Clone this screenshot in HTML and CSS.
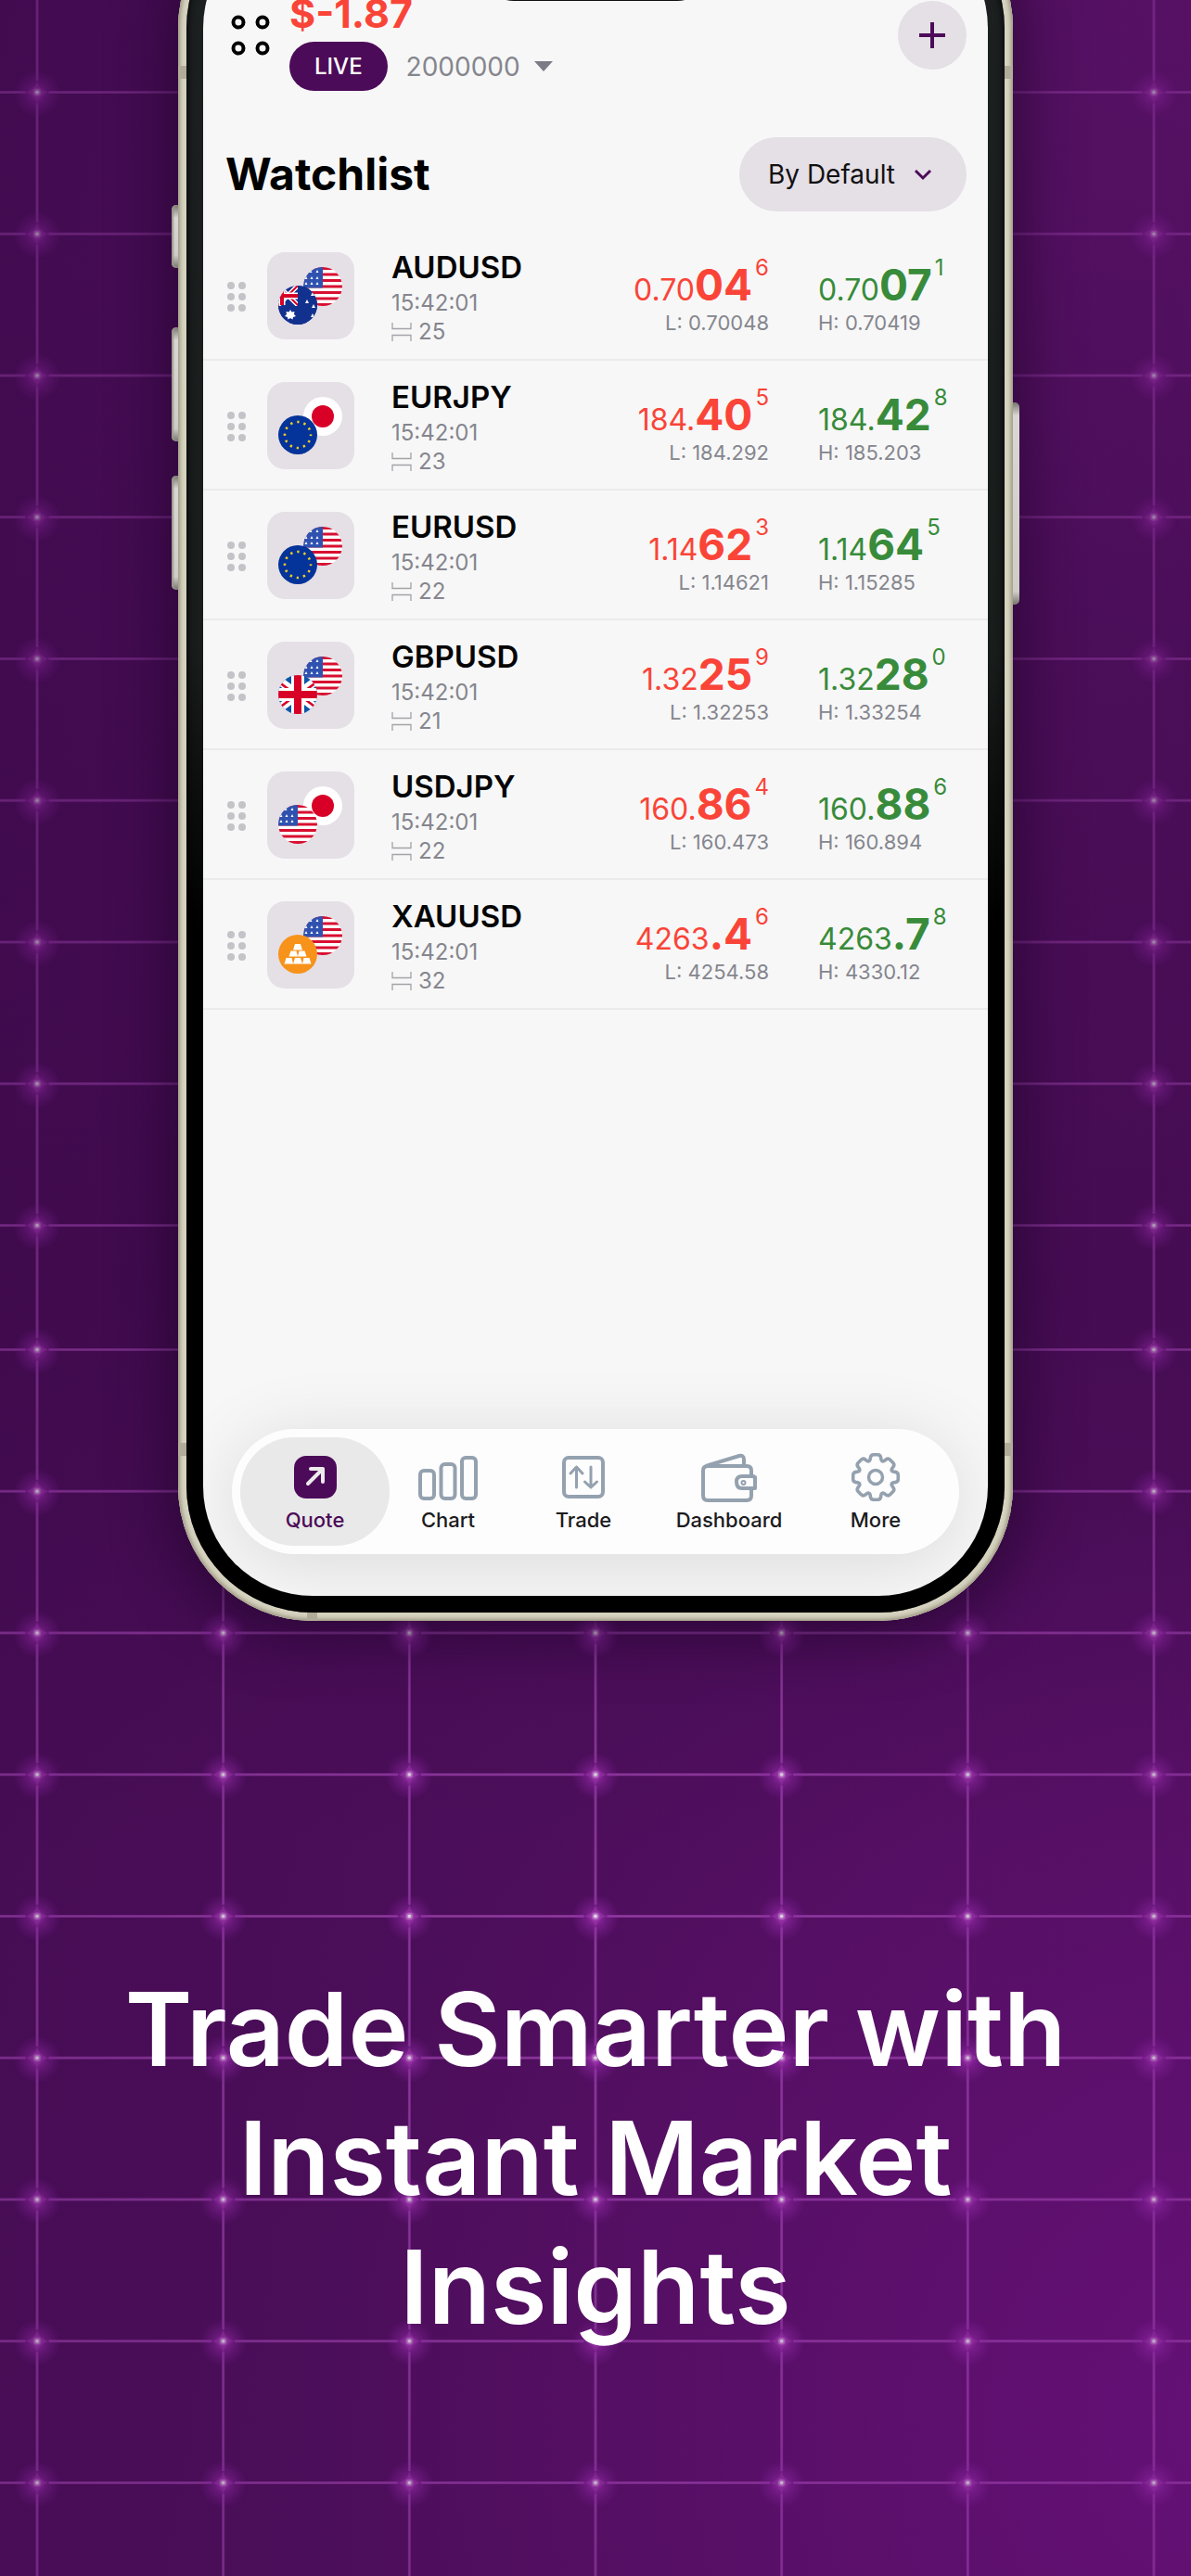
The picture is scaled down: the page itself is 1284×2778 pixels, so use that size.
FILE: index.html
```html
<!DOCTYPE html>
<html lang="en">
<head>
<meta charset="utf-8">
<meta name="viewport" content="width=device-width, initial-scale=1">
<title>Trade Smarter with Instant Market Insights</title>
<link rel="stylesheet" href="styles.css">
</head>
<body>
<svg class="defs" width="0" height="0" aria-hidden="true">
  <defs>
    <clipPath id="disc"><circle cx="21" cy="21" r="21"/></clipPath>
    <symbol id="flag-us" viewBox="0 0 42 42">
      <g clip-path="url(#disc)">
        <path fill="#fff" d="M0 0h42v42H0z"/>
        <path stroke="#d80f30" stroke-width="3" d="M0 1.6h42M0 8.1h42M0 14.5h42M0 21h42M0 27.5h42M0 33.9h42M0 40.4h42"/>
        <path fill="#2f52b0" d="M0 0h21v22.6H0z"/>
        <path fill="#fff" d="M8 3l1.5 3h-3zM15 3l1.5 3h-3zM3 10l1.5 3h-3zM9 10l1.5 3h-3zM15 10l1.5 3h-3zM3 16l1.5 3h-3zM9 16l1.5 3h-3zM15 16l1.5 3h-3z"/>
      </g>
    </symbol>
    <symbol id="flag-jp" viewBox="0 0 42 42">
      <circle cx="21" cy="21" r="21" fill="#fff"/><circle cx="21" cy="21" r="12" fill="#d80027"/>
    </symbol>
    <symbol id="flag-eu" viewBox="0 0 42 42">
      <circle cx="21" cy="21" r="21" fill="#043399"/>
      <circle cx="21" cy="21" r="14" fill="none" stroke="#f3cc25" stroke-width="2.6" stroke-dasharray="2.4 4.93" stroke-dashoffset="1.2"/>
    </symbol>
    <symbol id="flag-gb" viewBox="0 0 42 42">
      <g clip-path="url(#disc)">
        <path fill="#0b55a8" d="M0 0h42v42H0z"/>
        <path stroke="#fff" stroke-width="9" d="M0 5l42 32M42 5L0 37"/>
        <path stroke="#d80027" stroke-width="2.6" d="M0 7l16 12M42 7L26 19M0 36l16-12M42 36L26 24"/>
        <path stroke="#fff" stroke-width="14" d="M21 0v42M0 21h42"/>
        <path stroke="#d80027" stroke-width="8" d="M21 0v42M0 21h42"/>
      </g>
    </symbol>
    <symbol id="flag-au" viewBox="0 0 42 42">
      <g clip-path="url(#disc)">
        <path fill="#12318f" d="M0 0h42v42H0z"/>
        <path stroke="#fff" stroke-width="5" d="M0 0l21 21M21 0L0 21"/>
        <path stroke="#d80027" stroke-width="2" d="M0 0l21 21M21 0L0 21"/>
        <path stroke="#fff" stroke-width="7" d="M4 0v21M0 11h21"/>
        <path stroke="#d80027" stroke-width="4" d="M4 0v21M0 11h21"/>
        <path fill="#12318f" d="M21 0h21v42H0V22h21z"/>
        <path fill="#fff" d="M13 26l1.500 2.500 3-.5-.5 3 2 2-3 1-.500 2.500-2.500-1.500-2.500 1.500-.5-2.500-3-1 2-2-.500-3 3 .5zM31 15l2 4h-4zM37 7l2 4h-4zM38 20l2 4h-4zM37 30l2 4h-4z"/>
      </g>
    </symbol>
    <symbol id="coin-gold" viewBox="0 0 42 42">
      <circle cx="21" cy="21" r="21" fill="#f7931a"/>
      <path fill="#fff" d="M18 10h6l2 6.500h-10zM13.500 17.500h6l1.500 6h-9.500zM22.500 17.500h6l2 6h-9.500zM8.500 25h6l1.500 6.500h-9.500zM18 25h6l2 6.500h-10zM27.500 25h6l2 6.500h-9.500z"/>
    </symbol>
    <symbol id="grip" viewBox="0 0 20 32">
      <g fill="#c4c3c8"><circle cx="4" cy="4" r="4"/><circle cx="16" cy="4" r="4"/><circle cx="4" cy="16" r="4"/><circle cx="16" cy="16" r="4"/><circle cx="4" cy="28" r="4"/><circle cx="16" cy="28" r="4"/></g>
    </symbol>
    <symbol id="spread" viewBox="0 0 22 22">
      <path fill="none" stroke="#a3a3a9" stroke-width="1.300" d="M1 1v6.500h20V1M1 21v-6.500h20V21"/>
    </symbol>
    <g id="gear-body"><circle r="18.500"/>
      <g id="teeth"><path d="M-8-17Q-4.500-18-4.300-23Q-4-25-2.500-25h5Q4-25 4.300-23Q4.500-18 8-17z"/><path transform="rotate(45)" d="M-8-17Q-4.500-18-4.300-23Q-4-25-2.500-25h5Q4-25 4.300-23Q4.500-18 8-17z"/></g>
      <use href="#teeth" transform="rotate(90)"/><use href="#teeth" transform="rotate(180)"/><use href="#teeth" transform="rotate(270)"/>
    </g>
  </defs>
</svg>

<main class="poster">
  <svg class="grid-art" aria-hidden="true">
    <defs>
      <radialGradient id="halo"><stop offset="0" stop-color="#b23ac4" stop-opacity=".8"/><stop offset=".4" stop-color="#9a2db0" stop-opacity=".45"/><stop offset="1" stop-color="#8a25a5" stop-opacity="0"/></radialGradient>
      <radialGradient id="light" gradientUnits="userSpaceOnUse" cx="0" cy="2090" r="1300"><stop offset="0" stop-color="#fff"/><stop offset=".45" stop-color="#ccc"/><stop offset="1" stop-color="#888"/></radialGradient>
      <mask id="fade" maskUnits="userSpaceOnUse" x="-3000" y="0" width="6000" height="6000"><path fill="url(#light)" d="M-3000 0h6000v6000h-6000z"/></mask>
      <g id="cell">
        <path stroke="#a94aba" stroke-opacity=".75" stroke-width="2.400" d="M0 76.400h88M112.700 76.400h88M100.330 0v64M100.330 88v65"/>
        <circle cx="100.330" cy="78" r="26" fill="url(#halo)"/>
        <path fill="#9a34a8" fill-opacity=".7" d="M100.330 64Q102 74 112.300 76.400Q102 79 100.330 89Q98.500 79 88.300 76.400Q98.500 74 100.330 64z"/>
        <circle cx="100.330" cy="76.400" r="4" fill="#c88fd2" fill-opacity=".6"/><circle cx="100.330" cy="76.400" r="2" fill="#e6dbe9"/>
      </g>
      <pattern id="upper" patternUnits="userSpaceOnUse" x="-100.330" y="23.100" width="200.660" height="152.750"><use href="#cell"/></pattern>
      <pattern id="lower" patternUnits="userSpaceOnUse" x="-100.330" y="1379.100" width="200.660" height="152.750"><use href="#cell"/></pattern>
    </defs>
    <svg x="50%" overflow="visible">
      <g mask="url(#fade)">
        <path fill="url(#upper)" d="M-3000 0h6000v1388h-6000z"/>
        <path fill="url(#lower)" d="M-3000 1388h6000v4000h-6000z"/>
      </g>
    </svg>
  </svg>

  <section class="phone">
    <span class="key key-action"></span><span class="key key-up"></span><span class="key key-down"></span><span class="key key-power"></span>
    <span class="seam seam-tl"></span><span class="seam seam-tr"></span><span class="seam seam-bl"></span><span class="seam seam-br"></span><span class="seam seam-bottom"></span>
    <div class="bezel">
      <div class="screen">
        <span class="island"></span>
        <header class="account">
          <button class="icon-button" aria-label="Menu">
            <svg width="42" height="46" viewBox="0 0 42 46" fill="none" stroke="#000" stroke-width="4"><circle cx="8" cy="9" r="5.500"/><circle cx="34" cy="9" r="5.500"/><circle cx="8" cy="37" r="5.500"/><circle cx="34" cy="37" r="5.500"/></svg>
          </button>
          <div class="account-info">
            <p class="profit">$-1.87</p>
            <div class="account-line">
              <span class="live">LIVE</span>
              <button class="account-number">2000000
                <svg width="20" height="11" viewBox="0 0 20 11"><path fill="#7b7c86" d="M0 0h20L10 11z"/></svg>
              </button>
            </div>
          </div>
          <button class="add" aria-label="Add">
            <svg width="28" height="28" viewBox="0 0 28 28"><path stroke="#4c0b58" stroke-width="4" d="M14 0v28M0 14h28"/></svg>
          </button>
        </header>

        <div class="title-bar">
          <h2>Watchlist</h2>
          <button class="sort">By Default
            <svg width="20" height="13" viewBox="0 0 20 13"><path fill="none" stroke="#4c0b58" stroke-width="3" d="M2 2l8 8 8-8"/></svg>
          </button>
        </div>

        <ul class="quotes">
          <li class="quote">
            <svg class="grip" aria-hidden="true"><use href="#grip"/></svg>
            <svg class="pair" viewBox="0 0 94 94" aria-hidden="true"><use href="#flag-us" x="39" y="16" width="42" height="42"/><use href="#flag-au" x="12" y="36" width="42" height="42"/></svg>
            <div class="name"><h3>AUDUSD</h3><p>15:42:01</p><p class="spread"><svg aria-hidden="true"><use href="#spread"/></svg>25</p></div>
            <div class="price bid"><p class="value">0.70<b>04</b><sup>6</sup></p><p class="range">L: 0.70048</p></div>
            <div class="price ask"><p class="value">0.70<b>07</b><sup>1</sup></p><p class="range">H: 0.70419</p></div>
          </li>
          <li class="quote">
            <svg class="grip" aria-hidden="true"><use href="#grip"/></svg>
            <svg class="pair" viewBox="0 0 94 94" aria-hidden="true"><use href="#flag-jp" x="39" y="16" width="42" height="42"/><use href="#flag-eu" x="12" y="36" width="42" height="42"/></svg>
            <div class="name"><h3>EURJPY</h3><p>15:42:01</p><p class="spread"><svg aria-hidden="true"><use href="#spread"/></svg>23</p></div>
            <div class="price bid"><p class="value">184.<b>40</b><sup>5</sup></p><p class="range">L: 184.292</p></div>
            <div class="price ask"><p class="value">184.<b>42</b><sup>8</sup></p><p class="range">H: 185.203</p></div>
          </li>
          <li class="quote">
            <svg class="grip" aria-hidden="true"><use href="#grip"/></svg>
            <svg class="pair" viewBox="0 0 94 94" aria-hidden="true"><use href="#flag-us" x="39" y="16" width="42" height="42"/><use href="#flag-eu" x="12" y="36" width="42" height="42"/></svg>
            <div class="name"><h3>EURUSD</h3><p>15:42:01</p><p class="spread"><svg aria-hidden="true"><use href="#spread"/></svg>22</p></div>
            <div class="price bid"><p class="value">1.14<b>62</b><sup>3</sup></p><p class="range">L: 1.14621</p></div>
            <div class="price ask"><p class="value">1.14<b>64</b><sup>5</sup></p><p class="range">H: 1.15285</p></div>
          </li>
          <li class="quote">
            <svg class="grip" aria-hidden="true"><use href="#grip"/></svg>
            <svg class="pair" viewBox="0 0 94 94" aria-hidden="true"><use href="#flag-us" x="39" y="16" width="42" height="42"/><use href="#flag-gb" x="12" y="36" width="42" height="42"/></svg>
            <div class="name"><h3>GBPUSD</h3><p>15:42:01</p><p class="spread"><svg aria-hidden="true"><use href="#spread"/></svg>21</p></div>
            <div class="price bid"><p class="value">1.32<b>25</b><sup>9</sup></p><p class="range">L: 1.32253</p></div>
            <div class="price ask"><p class="value">1.32<b>28</b><sup>0</sup></p><p class="range">H: 1.33254</p></div>
          </li>
          <li class="quote">
            <svg class="grip" aria-hidden="true"><use href="#grip"/></svg>
            <svg class="pair" viewBox="0 0 94 94" aria-hidden="true"><use href="#flag-jp" x="39" y="16" width="42" height="42"/><use href="#flag-us" x="12" y="36" width="42" height="42"/></svg>
            <div class="name"><h3>USDJPY</h3><p>15:42:01</p><p class="spread"><svg aria-hidden="true"><use href="#spread"/></svg>22</p></div>
            <div class="price bid"><p class="value">160.<b>86</b><sup>4</sup></p><p class="range">L: 160.473</p></div>
            <div class="price ask"><p class="value">160.<b>88</b><sup>6</sup></p><p class="range">H: 160.894</p></div>
          </li>
          <li class="quote">
            <svg class="grip" aria-hidden="true"><use href="#grip"/></svg>
            <svg class="pair" viewBox="0 0 94 94" aria-hidden="true"><use href="#flag-us" x="39" y="16" width="42" height="42"/><use href="#coin-gold" x="12" y="36" width="42" height="42"/></svg>
            <div class="name"><h3>XAUUSD</h3><p>15:42:01</p><p class="spread"><svg aria-hidden="true"><use href="#spread"/></svg>32</p></div>
            <div class="price bid"><p class="value">4263<b>.4</b><sup>6</sup></p><p class="range">L: 4254.58</p></div>
            <div class="price ask"><p class="value">4263<b>.7</b><sup>8</sup></p><p class="range">H: 4330.12</p></div>
          </li>
        </ul>

        <nav class="tabs">
          <a class="tab active" href="#quote">
            <svg width="46" height="54" viewBox="0 0 46 54"><rect y="4" width="46" height="46" rx="13" fill="#4c0b58"/><path fill="none" stroke="#ececec" stroke-width="4" stroke-linecap="round" stroke-linejoin="round" d="M15 34l16-16M18 18h13v14"/></svg>
            Quote</a>
          <a class="tab" href="#chart">
            <svg width="64" height="54" viewBox="0 0 64 54" fill="none" stroke="#94a1af" stroke-width="4"><rect x="2" y="20" width="15" height="30" rx="4"/><rect x="24.500" y="13" width="15" height="37" rx="4"/><rect x="47" y="6" width="15" height="44" rx="4"/></svg>
            Chart</a>
          <a class="tab" href="#trade">
            <svg width="46" height="54" viewBox="0 0 46 54" fill="none" stroke="#94a1af" stroke-width="4"><rect x="2" y="6" width="42" height="42" rx="5"/><path stroke-width="3" stroke-linecap="round" stroke-linejoin="round" d="M15.500 38V16M9 23l6.500-7 6.500 7M31 16v22M24.500 32l6.500 6 6.500-6"/></svg>
            Trade</a>
          <a class="tab" href="#dashboard">
            <svg width="60" height="54" viewBox="0 0 60 54" fill="none" stroke="#94a1af" stroke-width="4" stroke-linejoin="round"><path d="M54 25v-5q0-5-5-5H7q-5 0-5 5v27q0 5 5 5h42q5 0 5-5v-6"/><path d="M5 15L41 4q5-1 5 4v7"/><path d="M58 27v12H44q-6 0-6-7 0-6 6-6h11q3 0 3 3z"/><circle cx="45.500" cy="33" r="1" /></svg>
            Dashboard</a>
          <a class="tab" href="#more">
            <svg width="54" height="54" viewBox="-27 -27 54 54"><g transform="scale(.9)"><use href="#gear-body" fill="#94a1af" stroke="#94a1af" stroke-width="8" stroke-linejoin="round"/><use href="#gear-body" fill="#fdfdfd"/></g><circle r="7.500" fill="#fdfdfd" stroke="#94a1af" stroke-width="3.500"/></svg>
            More</a>
        </nav>
      </div>
    </div>
  </section>

  <h1>Trade Smarter with Instant Market Insights</h1>
</main>
</body>
</html>
```
FILE: styles.css
```css
* { box-sizing: border-box; margin: 0; padding: 0; }

body {
  font-family: Inter, "Liberation Sans", sans-serif;
  background: #450c53;
}

button {
  font: inherit;
  border: 0;
  background: none;
  cursor: pointer;
}

svg { display: block; flex: none; }
.defs { position: absolute; }

.poster {
  position: relative;
  display: flex;
  flex-direction: column;
  min-height: 100vh;
  overflow: hidden;
  background:
    radial-gradient(circle at 105% 94%, #6b117dcc 0, #6b117d00 1000px),
    linear-gradient(#38084400 10%, #38084466 50%, #38084400 72%),
    radial-gradient(circle at 100% 0, #5a1268aa 0, #5a126800 700px),
    linear-gradient(100deg, #420b50 0%, #4c0e5a 50%, #500f5e 100%);
}

.grid-art {
  position: absolute;
  inset: 0;
  width: 100%;
  height: 100%;
}

/* Handset */
.phone {
  position: relative;
  margin: -115px 192px 0;
  padding: 9px;
  border-radius: 145px;
  background: #d5d2bf;
  box-shadow: 0 8px 60px 10px #1c042699;
}

.phone::before {
  content: "";
  position: absolute;
  inset: 0;
  border-radius: inherit;
  background: #d5d2bf;
  box-shadow: inset 0 0 4px 2px #99957f;
}

.bezel {
  position: relative;
  padding: 18px;
  border-radius: 136px;
  background: linear-gradient(#1c2020 0, #181c1b 44%, #000 60%);
  box-shadow: inset 0 0 8px #000;
}

.screen {
  position: relative;
  display: flex;
  flex-direction: column;
  min-height: 1809px;
  padding: 77px 0 45px;
  border-radius: 118px;
  overflow: hidden;
  background: #f7f7f7;
}

.island {
  position: absolute;
  top: 15px;
  left: 50%;
  width: 250px;
  height: 74px;
  margin-left: -125px;
  border-radius: 37px;
  background: #111;
}

.key {
  position: absolute;
  left: -7px;
  width: 14px;
  border-radius: 5px;
  background: linear-gradient(#77756d, #d9d7d3 14px, #cfcdc8 calc(100% - 14px), #77756d);
  box-shadow: inset 2px 0 2px #99968c;
}
.key-action { top: 336px; height: 68px; }
.key-up { top: 468px; height: 123px; }
.key-down { top: 628px; height: 123px; }
.key-power { top: 549px; left: auto; right: -7px; height: 218px; }

/* The band covers the inner half of each key */
.key { z-index: 0; }
.phone::before { z-index: 1; }
.seam { z-index: 2; }
.bezel { z-index: 3; }

.seam {
  position: absolute;
  width: 9px;
  height: 14px;
  background: #b0ac99;
}
.seam-tl { top: 186px; left: 0; }
.seam-tr { top: 186px; right: 0; }
.seam-bl { bottom: 178px; left: 0; }
.seam-br { bottom: 178px; right: 0; }
.seam-bottom { bottom: 0; left: 139px; width: 11px; height: 9px; }

/* Account header */
.account {
  display: flex;
  align-items: flex-start;
  padding: 0 23px 0 22px;
}

.icon-button { margin: 26px 21px 0 8px; }
.account-info { flex: 1; }

.profit {
  color: #fa4438;
  font-size: 43px;
  font-weight: 700;
  line-height: 50px;
}

.account-line {
  display: flex;
  align-items: center;
  gap: 20px;
  margin-top: 6px;
}

.live {
  padding: 0 27px;
  border-radius: 27px;
  background: #4c0b58;
  color: #fff;
  font-size: 24px;
  font-weight: 500;
  line-height: 53px;
}

.account-number {
  display: flex;
  align-items: center;
  gap: 15px;
  color: #85868e;
  font-size: 28px;
}

.add {
  display: grid;
  place-items: center;
  width: 74px;
  height: 74px;
  margin-top: 12px;
  border-radius: 50%;
  background: #e5dfe6;
}

.title-bar {
  display: flex;
  align-items: center;
  justify-content: space-between;
  margin-top: 50px;
  padding: 0 23px 0 24px;
}

.title-bar h2 {
  font-size: 48px;
  font-weight: 700;
  line-height: 80px;
}

.sort {
  display: flex;
  align-items: center;
  gap: 20px;
  height: 80px;
  padding: 0 37px 0 31px;
  border-radius: 40px;
  background: #e5dfe6;
  color: #111;
  font-size: 28px;
}

/* Quotes */
.quotes {
  margin-top: 21px;
  list-style: none;
}

.quote {
  display: grid;
  grid-template-columns: 20px 94px 1fr 200px 213px;
  align-items: start;
  height: 140px;
  padding: 23px 23px 0 26px;
  border-bottom: 2px solid #ebebec;
}

.grip {
  width: 20px;
  height: 32px;
  margin-top: 32px;
}

.pair {
  width: 94px;
  height: 94px;
  margin-left: 23px;
  border-radius: 19px;
  background: #e5dfe6;
}

.name {
  padding-left: 63px;
  color: #85868e;
  font-size: 24px;
  line-height: 31px;
}

.name h3 {
  margin-bottom: 6px;
  color: #050505;
  font-size: 33px;
  font-weight: 600;
  line-height: 33px;
}

.spread {
  display: flex;
  align-items: center;
  gap: 7px;
}
.spread svg { width: 22px; height: 22px; }

.price { white-space: nowrap; }

.value {
  height: 63px;
  padding-top: 5px;
  font-size: 32px;
  line-height: 60px;
}
.value b { font-size: 46px; font-weight: 700; line-height: 1; }
.value sup {
  display: inline-block;
  margin-left: 3px;
  font-size: 24px;
  line-height: 1;
  vertical-align: 27px;
}

.range {
  color: #85868e;
  font-size: 22px;
  line-height: 26px;
}

.bid { text-align: right; }
.bid .value { color: #fa4438; }
.ask .value { color: #388b3a; }
.ask { padding-left: 53px; }

/* Bottom tabs */
.tabs {
  display: grid;
  grid-template-columns: 161fr 126fr 166fr 148fr 168fr;
  height: 135px;
  margin: auto 31px 0;
  padding: 9px 6px 9px 9px;
  border-radius: 68px;
  background: #fdfdfd;
  box-shadow: 0 10px 80px #0000001f;
}

.tab {
  display: flex;
  flex-direction: column;
  align-items: center;
  gap: 4px;
  padding-top: 16px;
  border-radius: 58px;
  color: #1c1b1e;
  font-size: 22px;
  font-weight: 500;
  line-height: 30px;
  text-decoration: none;
}

.tab.active {
  background: #e9e9e9;
  color: #4c0b58;
}

h1 {
  position: relative;
  max-width: 1100px;
  margin: 371px auto 190px;
  color: #fff;
  font-size: 110px;
  font-weight: 600;
  line-height: 139px;
  text-align: center;
}
```
